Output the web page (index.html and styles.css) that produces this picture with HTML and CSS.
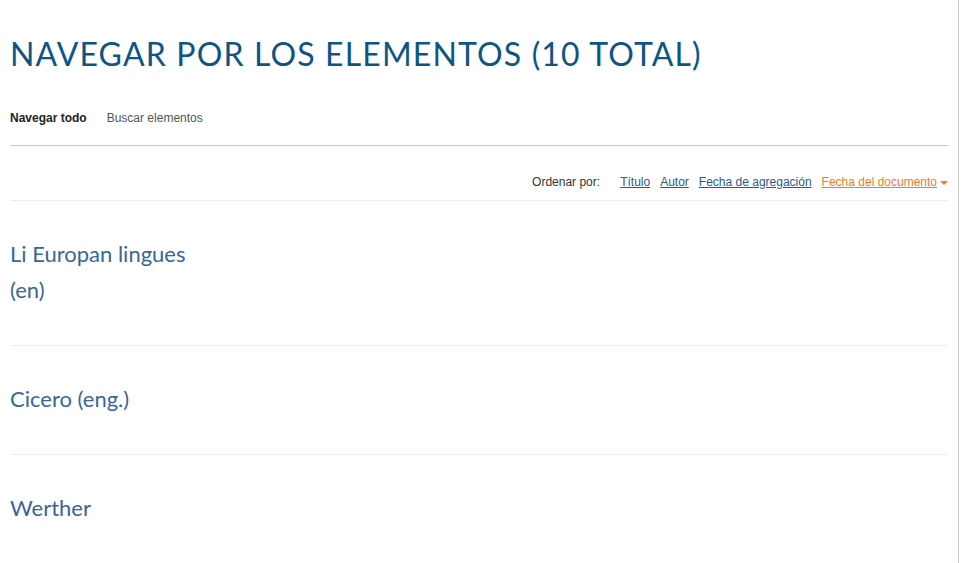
FILE: index.html
```html
<!DOCTYPE html>
<html lang="es">
<head>
<meta charset="utf-8">
<title>Navegar por los elementos</title>
<link rel="stylesheet" href="styles.css">
</head>
<body>
<div class="page">
  <h1 class="page-title">Navegar por los elementos (10 total)</h1>
  <nav class="tabs">
    <a class="tab tab-active" href="#">Navegar todo</a>
    <a class="tab" href="#">Buscar elementos</a>
  </nav>
  <div class="sort-bar">
    <span class="sort-label">Ordenar por:</span>
    <a class="sort-link" href="#">Título</a>
    <a class="sort-link" href="#">Autor</a>
    <a class="sort-link" href="#">Fecha de agregación</a>
    <a class="sort-link sort-active" href="#">Fecha del documento<span class="caret"></span></a>
  </div>
  <div class="item"><h2 class="item-title">Li Europan lingues (en)</h2></div>
  <div class="item"><h2 class="item-title">Cicero (eng.)</h2></div>
  <div class="item"><h2 class="item-title">Werther</h2></div>
</div>
</body>
</html>
```
FILE: styles.css
```css
html, body {
  margin: 0;
  padding: 0;
  background: #fff;
}
.page {
  width: 938px;
  padding: 0 10px;
  border-right: 1px solid #c8c8c8;
  min-height: 563px;
  box-sizing: content-box;
  font-family: "Liberation Sans", Arial, sans-serif;
}
.page-title {
  margin: 0;
  padding-top: 34px;
  font-family: Lato, "Open Sans", sans-serif;
  font-weight: 400;
  font-size: 32px;
  line-height: 40px;
  letter-spacing: 1.15px;
  text-transform: uppercase;
  color: #0e5583;
}
.tabs {
  display: flex;
  gap: 20px;
  margin-top: 36px;
  padding-bottom: 19px;
  border-bottom: 1px solid #c8c8c8;
  font-size: 12px;
  line-height: 16px;
}
.tab {
  color: #555;
  text-decoration: none;
}
.tab-active {
  color: #222;
  font-weight: bold;
}
.sort-bar {
  display: flex;
  justify-content: flex-end;
  align-items: baseline;
  gap: 10px;
  padding: 28px 0 10px;
  border-bottom: 1px solid #ececec;
  font-size: 12px;
  line-height: 16px;
}
.sort-label {
  color: #333;
  margin-right: 10px;
}
.sort-link {
  color: #2a5a8c;
  text-decoration: underline;
}
.sort-active {
  color: #f5791f;
}
.caret {
  display: inline-block;
  width: 0;
  height: 0;
  margin-left: 3px;
  vertical-align: middle;
  border-left: 4px solid transparent;
  border-right: 4px solid transparent;
  border-top: 4px solid #f5791f;
}
.item {
  padding: 35px 0 37px;
  border-bottom: 1px solid #ececec;
}
.item-title {
  margin: 0;
  width: 200px;
  font-family: Lato, "Open Sans", sans-serif;
  font-weight: 400;
  font-size: 22px;
  line-height: 36px;
  color: #386698;
}
```
